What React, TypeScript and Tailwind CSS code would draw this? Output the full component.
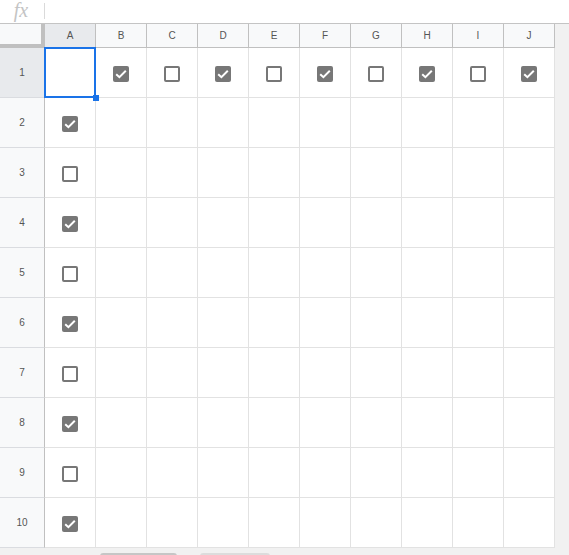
import React from 'react';

const cols = ['A', 'B', 'C', 'D', 'E', 'F', 'G', 'H', 'I', 'J'];
const rows = [1, 2, 3, 4, 5, 6, 7, 8, 9, 10];

function Checkbox({ checked }: { checked: boolean }) {
  if (checked) {
    return (
      <div className="w-[16px] h-[16px] rounded-[2px] bg-[#777777] flex items-center justify-center">
        <svg width="16" height="16" viewBox="0 0 16 16">
          <path d="M3.2 8.2 L6.4 11.2 L12.8 4.8" fill="none" stroke="#ffffff" strokeWidth="2" />
        </svg>
      </div>
    );
  }
  return <div className="w-[16px] h-[16px] rounded-[2px] border-2 border-[#777777] bg-white" />;
}

// which cells hold a checkbox, and whether it is ticked
function cellBox(r: number, c: number): boolean | null {
  if (r === 1 && c > 0) return c % 2 === 1;
  if (c === 0 && r > 1) return r % 2 === 0;
  return null;
}

export default function App() {
  return (
    <div className="w-[569px] h-[555px] bg-[#f1f1f1] overflow-hidden font-['Liberation_Sans',Arial,sans-serif] relative">
      {/* formula bar */}
      <div className="h-[24px] bg-white border-b border-[#c4c4c4] flex items-start">
        <div className="w-[44px] h-[22px] flex justify-center items-start">
          <span className="font-['Liberation_Serif',serif] italic text-[20px] leading-[20px] text-[#c4c4c4] pr-[2px]">fx</span>
        </div>
        <div className="w-px h-[16px] mt-[3px] bg-[#dadada]" />
      </div>

      <div className="flex flex-col w-[555px]">
        {/* column headers */}
        <div className="flex h-[24px]">
          <div className="w-[45px] h-[24px] bg-[#f8f9fa] border-r-[4px] border-b-[4px] border-[#c0c0c0]" />
          {cols.map((c, i) => (
            <div
              key={c}
              className={`w-[51px] h-[24px] border-r border-b border-[#c0c0c0] flex items-center justify-center text-[10px] text-[#555555] ${
                i === 0 ? 'bg-[#e8eaed]' : 'bg-[#f8f9fa]'
              }`}
            >
              {c}
            </div>
          ))}
        </div>

        {rows.map((r) => (
          <div key={r} className="flex h-[50px]">
            <div
              className={`w-[45px] h-[50px] border-r border-b border-r-[#c0c0c0] border-b-[#dadce0] flex items-center justify-center text-[10px] text-[#555555] ${
                r === 1 ? 'bg-[#e8eaed]' : 'bg-[#f8f9fa]'
              }`}
            >
              {r}
            </div>
            {cols.map((c, ci) => {
              const box = cellBox(r, ci);
              return (
                <div
                  key={c}
                  className="relative w-[51px] h-[50px] bg-white border-r border-b border-[#e2e2e2] flex items-center justify-center"
                >
                  {box !== null && (
                    <div className="mt-[2px]">
                      <Checkbox checked={box} />
                    </div>
                  )}
                  {r === 1 && ci === 0 && (
                    <>
                      <div className="absolute z-10 -left-px -top-px w-[52px] h-[51px] border-2 border-[#1a73e8]" />
                      <div className="absolute z-10 -right-[4px] -bottom-[4px] w-[6px] h-[6px] bg-[#1a73e8]" />
                    </>
                  )}
                </div>
              );
            })}
          </div>
        ))}
      </div>

      {/* scrollbar thumbs */}
      <div className="absolute left-[100px] top-[553px] w-[77px] h-[6px] rounded-[3px] bg-[#c6c6c6]" />
      <div className="absolute left-[200px] top-[553px] w-[70px] h-[6px] rounded-[3px] bg-[#dcdcdc]" />
    </div>
  );
}
